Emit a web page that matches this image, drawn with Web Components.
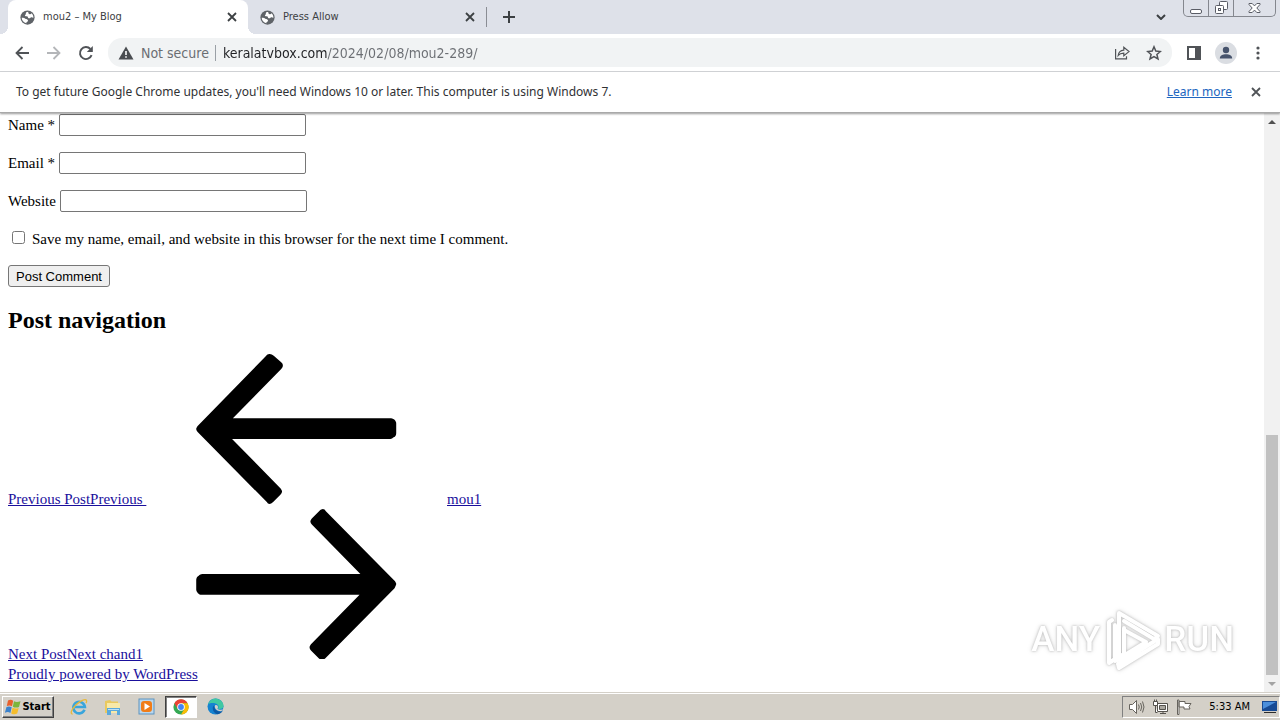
<!DOCTYPE html>
<html lang="en">
<head>
<meta charset="utf-8">
<title>mou2 – My Blog</title>
<style>
html, body {
  height: 100%;
  margin: 0;
}

body {
  --ui: "DejaVu Sans Condensed", "Noto Sans", sans-serif;
  background: #fff;
  color: #000;
  display: flex;
  flex-direction: column;
  font-family: "Liberation Serif", serif;
  font-size: 15px;
  overflow: hidden;
}
</style>
</head>
<body>

<tab-strip>
  <browser-tab active label="mou2 – My Blog"></browser-tab>
  <browser-tab label="Press Allow"></browser-tab>
</tab-strip>
<address-bar href="keralatvbox.com/2024/02/08/mou2-289/"></address-bar>
<info-bar>
  To get future Google Chrome updates, you'll need Windows 10 or later. This computer is using Windows 7.
  <a slot="link" href="#">Learn more</a>
</info-bar>
<page-view>
  <comment-form></comment-form>
  <post-navigation></post-navigation>
  <run-mark slot="overlay"></run-mark>
</page-view>
<task-bar time="5:33 AM"></task-bar>

<script>
// Shared by every element: open shadow root from a markup string
class Base extends HTMLElement {
  constructor() {
    super();
    const template = document.createElement( 'template' );
    template.innerHTML = this.constructor.markup;
    this._shadowRoot = this.attachShadow( {mode: 'open'} );
    this._shadowRoot.appendChild( template.content.cloneNode( true ) );
  }
}

// Plain button reset
const RESET = `
button {
  align-items: center;
  background: none;
  border: none;
  color: inherit;
  display: flex;
  flex: none;
  font: inherit;
  justify-content: center;
  margin: 0;
  padding: 0;
}
svg { display: block; flex: none; }
`;

const CROSS = `
<svg width="10" height="10" viewBox="0 0 10 10" fill="none" stroke="currentColor" stroke-width="1.800">
  <path d="M1 1l8 8M9 1l-8 8"/>
</svg>`;

// Tab
class BrowserTab extends Base {
  static markup = `
  <style>
  ${RESET}
  :host {
    align-items: center;
    box-sizing: border-box;
    color: #3c4043;
    display: flex;
    flex: 0 1 238px;
    font: 11px/16px var( --ui );
    gap: 8px;
    min-width: 0;
    padding: 0 11px 0 12px;
    position: relative;
  }

  :host( [active] ) {
    background: #fff;
    border-radius: 8px 8px 0 0;
    flex-basis: 240px;
  }

  /* Flared feet of the active tab */
  :host( [active] )::before,
  :host( [active] )::after {
    bottom: 0;
    content: '';
    height: 8px;
    position: absolute;
    width: 8px;
  }
  :host( [active] )::before {
    background: radial-gradient( circle at 0 0, transparent 8px, #fff 8px );
    left: -8px;
  }
  :host( [active] )::after {
    background: radial-gradient( circle at 100% 0, transparent 8px, #fff 8px );
    right: -8px;
  }

  span {
    flex: 1;
    overflow: hidden;
    white-space: nowrap;
  }
  button { height: 16px; width: 10px; }
  </style>
  <svg width="15" height="15" viewBox="0 0 16 16">
    <circle cx="8" cy="8" r="7.6" fill="#5f6368"/>
    <path fill="#fff" d="M8.8 1.8C7 1.900 6 2.600 6.200 3.900c.2 1-.9 1.200-1 2 0 .8 1 .7 1.800.7 1 0 1.500.6 1.500 1.500 0 .9 1.200.8 2 .6.8-.3 1-1 1.800-1 .8 0 1.300.6 2 .5.1-1.800-.7-3.500-1.900-4.700-.5.8-1.300 1.100-2.100.9-.9-.3-1.700-1-1.500-2.600zM1.800 8.300c.1 3 2.200 5.300 5 5.900-.1-1 .2-1.500 1-1.800.9-.4 1-1.300.3-2-.8-.8-1.900-.5-2.700-1.300-.8-.8-1.800-1.100-3.600-.8z"/>
  </svg>
  <span></span>
  <button aria-label="Close tab">${CROSS}</button>
  `;

  static get observedAttributes() {
    return ['label'];
  }

  attributeChangedCallback( name, oldValue, newValue ) {
    this._shadowRoot.querySelector( 'span' ).textContent = newValue;
  }
}

// Tab strip with the window controls
class TabStrip extends Base {
  static markup = `
  <style>
  ${RESET}
  :host {
    align-items: stretch;
    background: #dee1e9;
    color: #3c4043;
    display: flex;
    flex: none;
    height: 34px;
    padding: 0 4px 0 8px;
  }

  .rule {
    align-self: center;
    background: #8a8d94;
    height: 20px;
    width: 1px;
  }
  .new { width: 44px; }
  .space { flex: 1; }
  .list { width: 44px; }

  .controls {
    align-self: flex-start;
    border: solid 1px #84878e;
    border-radius: 0 0 5px 5px;
    border-top: none;
    box-sizing: border-box;
    display: flex;
    height: 17px;
    width: 93px;
  }
  .controls button { align-items: flex-end; flex: 1; padding-bottom: 2px; }
  .controls button + button { border-left: solid 1px #84878e; }
  .controls button:last-child { flex: 0 0 42px; }
  </style>
  <slot></slot>
  <div class="rule"></div>
  <button class="new" aria-label="New tab">
    <svg width="12" height="12" viewBox="0 0 12 12" stroke="currentColor" stroke-width="2"><path d="M6 0v12M0 6h12"/></svg>
  </button>
  <div class="space"></div>
  <button class="list" aria-label="Search tabs">
    <svg width="10" height="6" viewBox="0 0 10 6" fill="none" stroke="currentColor" stroke-width="2"><path d="M1 1l4 4 4-4"/></svg>
  </button>
  <div class="controls">
    <button aria-label="Minimize">
      <svg width="12" height="5" viewBox="0 0 12 5"><rect x=".5" y=".5" width="11" height="4" rx="1.500" fill="#fff" stroke="#5a5d66"/></svg>
    </button>
    <button aria-label="Restore">
      <svg width="13" height="13" viewBox="0 0 13 13" fill="#fff" stroke="#5a5d66"><rect x="4.500" y=".5" width="8" height="8" rx="1"/><rect x=".5" y="4.500" width="8" height="8" rx="1"/><rect x="3.500" y="7.500" width="2" height="2"/></svg>
    </button>
    <button aria-label="Close">
      <svg width="13" height="12" viewBox="0 0 13 12" fill="#fff" stroke="#5a5d66"><path d="M1 1.500h3.200l2.300 2.400 2.300-2.400H12v1L8.800 6l3.200 3.500v1H8.800L6.500 8.100l-2.300 2.400H1v-1L4.200 6 1 2.500z"/></svg>
    </button>
  </div>
  `;
}

// Navigation buttons and address field
class AddressBar extends Base {
  static markup = `
  <style>
  ${RESET}
  :host {
    align-items: center;
    background: #fff;
    border-bottom: solid 1px #d5d7da;
    color: #505357;
    display: flex;
    flex: none;
    font: 14px/20px var( --ui );
    height: 37px;
    padding: 0 6px;
  }
  button { height: 28px; width: 32px; }

  .field {
    align-items: center;
    background: #f1f3f4;
    border-radius: 14px;
    display: flex;
    flex: 1;
    height: 29px;
    margin: 0 6px;
    min-width: 0;
    padding: 0 2px 0 10px;
  }
  .state { color: #6b6e73; gap: 7px; width: auto; }
  .rule {
    background: #9aa0a6;
    height: 16px;
    margin: 0 7px 0 6px;
    width: 1px;
  }

  /* The host part of the address is darker than its path */
  input {
    background: linear-gradient( to right, #202124 104px, #6b6e73 104px ) text;
    border: none;
    color: #6b6e73;
    flex: 1;
    font: inherit;
    margin: 0;
    min-width: 0;
    outline: none;
    padding: 0;
    -webkit-text-fill-color: transparent;
  }
  .avatar svg { background: #dadde2; border-radius: 11px; }
  </style>
  <button aria-label="Back">
    <svg width="14" height="14" viewBox="0 0 14 14" fill="none" stroke="currentColor" stroke-width="1.800"><path d="M14 7H1.500M7.500 1l-6 6 6 6"/></svg>
  </button>
  <button aria-label="Forward">
    <svg width="14" height="14" viewBox="0 0 14 14" fill="none" stroke="#b4b6b9" stroke-width="1.800"><path d="M0 7h12.500M6.500 1l6 6-6 6"/></svg>
  </button>
  <button aria-label="Reload">
    <svg width="16" height="16" viewBox="0 0 16 16"><path d="M13.600 10.200A6 6 0 1 1 12.400 4" fill="none" stroke="currentColor" stroke-width="1.900"/><path fill="currentColor" d="M14.800 1v6H8.800z"/></svg>
  </button>
  <div class="field">
    <button class="state">
      <svg width="16" height="14" viewBox="0 0 16 14"><path fill="#4a4d51" d="M8 .5L15.500 13.500H.5z"/><path fill="#fff" d="M7.200 5h1.600v4H7.200zM7.200 10.200h1.600v1.600H7.200z"/></svg>
      Not secure
    </button>
    <div class="rule"></div>
    <input type="text" aria-label="Address" spellcheck="false">
    <button aria-label="Share">
      <svg width="16" height="15" viewBox="0 0 16 15" fill="none" stroke="currentColor" stroke-width="1.200"><path d="M1.600 4v9.900h10.900v-2.700M4.200 10.500c.4-3.400 2.400-5.200 5.600-5.400V2.300L15 6.600l-5.200 4.200V8.200c-2.600 0-4.300.6-5.600 2.300z"/></svg>
    </button>
    <button aria-label="Bookmark">
      <svg width="16" height="16" viewBox="0 0 16 16" fill="none" stroke="currentColor" stroke-width="1.500"><path d="M8 1.800l1.800 4.300 4.600.4-3.500 3 1.100 4.500L8 11.600 4 14l1.100-4.500-3.500-3 4.600-.4z"/></svg>
    </button>
  </div>
  <button aria-label="Side panel">
    <svg width="14" height="14" viewBox="0 0 14 14"><path fill="currentColor" fill-rule="evenodd" d="M0 0h14v14H0zM2 2v10h6V2z"/></svg>
  </button>
  <button class="avatar" aria-label="Profile">
    <svg width="22" height="22" viewBox="0 0 22 22" fill="#46536c"><circle cx="11" cy="8" r="3.200"/><path d="M4.800 16.500c0-3 3-4.300 6.200-4.300s6.200 1.300 6.200 4.300z"/></svg>
  </button>
  <button aria-label="Menu">
    <svg width="4" height="14" viewBox="0 0 4 14" fill="currentColor"><circle cx="2" cy="2" r="1.600"/><circle cx="2" cy="7" r="1.600"/><circle cx="2" cy="12" r="1.600"/></svg>
  </button>
  `;

  static get observedAttributes() {
    return ['href'];
  }

  attributeChangedCallback( name, oldValue, newValue ) {
    this._shadowRoot.querySelector( 'input' ).value = newValue;
  }
}

// Notice below the toolbar
class InfoBar extends Base {
  static markup = `
  <style>
  ${RESET}
  :host {
    align-items: center;
    background: #fff;
    border-bottom: solid 1px #a9a9a9;
    box-shadow: 0 1px 2px #0006;
    color: #303134;
    display: flex;
    flex: none;
    font: 12px/16px "Noto Sans", sans-serif;
    height: 40px;
    padding: 0 8px 0 16px;
    position: relative;
    z-index: 1;
  }
  p { flex: 1; margin: 0; }
  ::slotted( a ) { color: #2166c0; }
  button { color: #505357; height: 32px; margin-left: 8px; width: 32px; }
  </style>
  <p><slot></slot></p>
  <slot name="link"></slot>
  <button aria-label="Dismiss">${CROSS}</button>
  `;
}

// Document area and its scrollbar
class PageView extends Base {
  static markup = `
  <style>
  ${RESET}
  :host {
    display: flex;
    flex: 1;
    min-height: 0;
    position: relative;
  }
  main {
    flex: 1;
    line-height: 20px;
    overflow: hidden;
    padding: 1px 8px 0;
  }
  .scrollbar {
    background: #f1f1f1;
    display: flex;
    flex: none;
    flex-direction: column;
    width: 16px;
  }
  .scrollbar button { height: 17px; }
  .track {
    display: flex;
    flex: 1;
    flex-direction: column;
    justify-content: flex-end;
    padding: 0 2px;
  }
  .thumb { background: #c1c1c1; height: 44%; }
  </style>
  <main><slot></slot></main>
  <div class="scrollbar">
    <button aria-label="Scroll up"><svg width="8" height="4" viewBox="0 0 8 4"><path fill="#505050" d="M0 4l4-4 4 4z"/></svg></button>
    <div class="track"><div class="thumb"></div></div>
    <button aria-label="Scroll down"><svg width="8" height="4" viewBox="0 0 8 4"><path fill="#a3a3a3" d="M0 0l4 4 4-4z"/></svg></button>
  </div>
  <slot name="overlay"></slot>
  `;
}

class CommentForm extends Base {
  static markup = `
  <style>
  :host { display: block; }
  p { margin: 0 0 16px; }
  .text { align-items: center; display: flex; gap: 4px; }
  input[type=text], input[type=email], input[type=url] {
    border: solid 1px #767676;
    border-radius: 2px;
    box-sizing: border-box;
    height: 22px;
    margin: 0;
    padding: 1px 2px;
    width: 247px;
  }
  .check { align-items: center; display: flex; min-height: 21px; }
  input[type=checkbox] { margin: 0 7px 2px 4px; }
  button {
    background: #efefef;
    border: solid 1px #767676;
    border-radius: 3px;
    box-sizing: border-box;
    color: #000;
    font: 13px/16px "Liberation Sans", sans-serif;
    height: 22px;
    padding: 2px 7px 0;
  }
  .submit { display: flex; margin-bottom: 20px; }
  </style>
  <form>
    <p class="text"><label for="author">Name *</label><input id="author" type="text"></p>
    <p class="text"><label for="email">Email *</label><input id="email" type="email"></p>
    <p class="text"><label for="url">Website</label><input id="url" type="url"></p>
    <p class="check"><input id="consent" type="checkbox"><label for="consent">Save my name, email, and website in this browser for the next time I comment.</label></p>
    <p class="submit"><button type="button">Post Comment</button></p>
  </form>
  `;
}

class PostNavigation extends Base {
  static markup = `
  <style>
  :host { display: block; }
  h2 { font-size: 24px; line-height: 27px; margin: 0 0 20px; }
  a { color: #1a0f9c; }
  .row { align-items: flex-end; display: flex; height: 155px; }
  .label { min-width: 139px; white-space: pre; }
  svg { fill: #000; height: 150px; margin-bottom: 5px; width: 300px; }
  </style>
  <nav>
    <h2>Post navigation</h2>
    <a class="row" href="#"><span class="label">Previous PostPrevious </span><svg viewBox="0 0 43 32"><path d="M42.311 14.044c-0.178-0.178-0.533-0.356-0.711-0.356h-33.778l10.311-10.489c0.178-0.178 0.356-0.533 0.356-0.711 0-0.356-0.178-0.533-0.356-0.711l-1.600-1.422c-0.356-0.178-0.533-0.356-0.889-0.356s-0.533 0.178-0.711 0.356l-14.578 14.933c-0.178 0.178-0.356 0.533-0.356 0.711s0.178 0.533 0.356 0.711l14.756 14.933c0 0.178 0.356 0.356 0.533 0.356s0.533-0.178 0.711-0.356l1.600-1.600c0.178-0.178 0.356-0.533 0.356-0.711s-0.178-0.533-0.356-0.711l-10.311-10.489h33.778c0.178 0 0.533-0.178 0.711-0.356 0.356-0.178 0.533-0.533 0.533-0.889v-2.133c0-0.178-0.178-0.533-0.356-0.711z"/></svg><span>mou1</span></a>
    <a class="row" href="#"><span class="label">Next PostNext chand1</span><svg viewBox="0 0 43 32"><path d="M0.356 17.956c0.178 0.178 0.533 0.356 0.711 0.356h33.778l-10.311 10.489c-0.178 0.178-0.356 0.533-0.356 0.711 0 0.356 0.178 0.533 0.356 0.711l1.600 1.600c0.178 0.178 0.533 0.356 0.711 0.356s0.533-0.178 0.711-0.356l14.756-14.933c0.178-0.356 0.356-0.711 0.356-0.889s-0.178-0.533-0.356-0.711l-14.756-14.933c0-0.178-0.356-0.356-0.533-0.356s-0.533 0.178-0.711 0.356l-1.600 1.600c-0.178 0.178-0.356 0.533-0.356 0.711s0.178 0.533 0.356 0.711l10.311 10.489h-33.778c-0.178 0-0.533 0.178-0.711 0.356-0.356 0.178-0.533 0.533-0.533 0.889v2.133c0 0.178 0.178 0.533 0.356 0.711z"/></svg></a>
  </nav>
  <a href="#">Proudly powered by WordPress</a>
  `;
}

// Watermark over the page corner
class RunMark extends Base {
  static markup = `
  <style>
  :host {
    align-items: center;
    bottom: 20px;
    color: #fff;
    display: flex;
    filter: drop-shadow( 0 0 1px #bbb ) drop-shadow( 0 0 2px #ddd );
    font: 500 35px/64px Roboto, sans-serif;
    gap: 2px;
    pointer-events: none;
    position: absolute;
    right: 46px;
  }
  </style>
  <span>ANY</span>
  <svg width="60" height="64" viewBox="0 0 60 64" fill="none" stroke="#fff" stroke-width="4" stroke-linejoin="round" stroke-linecap="round">
    <path d="M17 48V5L56 28L52 31L22 13M22 20V46"/>
    <path d="M10 12L7 14V55L13 51V17M13 51L22 46M22 22L44 34L13 53M17 60L56 36V31L48 36L16 56z"/>
  </svg>
  <span>RUN</span>
  `;
}

// Desktop taskbar
class TaskBar extends Base {
  static markup = `
  <style>
  ${RESET}
  :host {
    align-items: center;
    background: #d4d0c8;
    border-top: solid 1px #d4d0c8;
    box-shadow: inset 0 1px #fff;
    color: #000;
    display: flex;
    flex: none;
    font: 11px/16px var( --ui );
    height: 27px;
    padding: 0 0 0 2px;
  }
  .start {
    border: solid 1px;
    border-color: #fff #404040 #404040 #fff;
    box-shadow: inset -1px -1px #808080;
    font-weight: bold;
    gap: 1px;
    height: 22px;
    margin-right: 9px;
    width: 52px;
  }
  .apps { display: flex; flex: 1; gap: 2px; }
  .apps button { box-sizing: border-box; height: 22px; width: 32px; }
  .apps .on {
    background: #fff;
    border: solid 1px;
    border-color: #404040 #fff #fff #404040;
    box-shadow: inset 1px 1px #808080;
  }
  .tray {
    align-items: center;
    border: solid 1px;
    border-color: #808080 #fff #fff #808080;
    box-sizing: border-box;
    display: flex;
    gap: 7px;
    height: 22px;
    padding: 0 1px 0 5px;
  }
  .tray time { margin: 0 3px 0 9px; }
  </style>
  <button class="start">
    <svg width="16" height="16" viewBox="0 0 16 16"><path fill="#e8602c" d="M3 1.500c2-1.200 3.600-.9 5.200.2L7 7.300c-1.600-1-3.100-1.200-5.200-.2z"/><path fill="#7cb53c" d="M9 2.200c1.700 1 3.700 1 6.500.1l-1.500 5.600c-2 1-4.400.8-6.200-.2z"/><path fill="#3b82cc" d="M1.500 8.100c2-1 3.600-.7 5.200.2l-1.300 5.600c-1.600-1-3.400-1.200-5.500-.2z"/><path fill="#f5bd2c" d="M7.500 8.800c1.800 1 4 1.100 6.200.2l-1.500 5.600c-2 1-4.200.8-6-.2z"/></svg>
    Start
  </button>
  <div class="apps">
    <button aria-label="Internet Explorer">
      <svg width="18" height="18" viewBox="0 0 18 18" fill="none"><path d="M14.500 11.800A5.800 5.800 0 1 1 14.900 9H5" stroke="#39a5dc" stroke-width="2.600"/><path d="M2.600 16c-2.700.2-1.300-4.500 3-8.800C10 2.800 15.500.500 16.500 2.400c.4.800.1 1.700-.4 2.700" stroke="#e8b93a" stroke-width="1.300"/></svg>
    </button>
    <button aria-label="File Explorer">
      <svg width="18" height="18" viewBox="0 0 18 18"><path fill="#e9c95f" d="M1 3l5-1 1.500 1.500H14V15H1z"/><path fill="#f8e9a8" d="M3 5h13v10H3z"/><path fill="#5aa9dc" d="M3 10h13v7h-3v-4H7v4H3z"/><path fill="#bfe1f5" d="M4 11h11v1H4z"/></svg>
    </button>
    <button aria-label="Media Player">
      <svg width="18" height="18" viewBox="0 0 18 18"><rect x="1" y="1" width="15" height="15" fill="#b9d7ee" stroke="#5d93bf"/><rect x="3" y="3" width="11" height="11" rx="3" fill="#f07d19"/><path fill="#fff" d="M6.500 5v7L12 8.500z"/></svg>
    </button>
    <button class="on" aria-label="Chrome">
      <svg width="16" height="16" viewBox="0 0 16 16"><circle cx="8" cy="8" r="7.600" fill="#34a853"/><path fill="#ea4335" d="M1.400 4.200A7.600 7.600 0 0 1 14.600 4.200H8L4.700 9.900z"/><path fill="#fbbc05" d="M14.600 4.200A7.600 7.600 0 0 1 8 15.600L11.300 9.900 8 4.200z"/><circle cx="8" cy="8" r="3.800" fill="#fff"/><circle cx="8" cy="8" r="2.900" fill="#4285f4"/></svg>
    </button>
    <button aria-label="Edge">
      <svg width="17" height="17" viewBox="0 0 17 17"><circle cx="8.500" cy="8.500" r="8" fill="#1583d0"/><path fill="#3fc8a2" d="M1 6.500C2.500 2 6-.2 10 .7c4 .9 6.500 4 6.500 7 0 2.800-2.600 3.800-5.500 3.100 1.200-2 .6-4.500-2.500-5.400C5.800 4.700 3 5 1 6.500z"/><path fill="#0c59a4" d="M6.600 7.500c-1.800 2.800-.6 7 3.500 8.800 2.500-.2 4.500-1.400 5.600-3.300-4.500 1.700-8-.8-9.100-5.500z"/><path fill="#d4d0c8" d="M8 7.500c1-1 3-.4 3 1.500 0 1-.8 1.500-.3 2.100.8.900 3.300 1 5.300-.2l-1.500 2.200C11 13.600 7 11 8 7.500z"/></svg>
    </button>
  </div>
  <div class="tray">
    <svg width="17" height="16" viewBox="0 0 17 16" fill="#fff" stroke="#66635d"><path d="M1.500 5.500h3l4-4v13l-4-4h-3z"/><path fill="none" d="M10.500 5.500q1.500 2.500 0 5M12.500 4q2.500 4 0 8M14.500 2.500q3 5.500 0 11"/></svg>
    <svg width="17" height="16" viewBox="0 0 17 16" fill="#fff" stroke="#55524d"><path d="M5.500 4.500h10v8h-10zM8 14.500h6M11 12.500v2"/><path fill="#aaa79f" d="M7.500 6.500h6v4h-6z"/><path d="M1.500 2.500h4v4h-4zM2.500.5v2M4.500.5v2M3.500 6.500v7h2"/></svg>
    <svg width="17" height="16" viewBox="0 0 17 16" fill="#fff" stroke="#66635d"><path d="M1.500 1v14.500h1.500V1zM3 2.500h6v2h6l-2 3 1 2.500H8v-2H3z"/></svg>
    <time></time>
    <svg width="18" height="16" viewBox="0 0 18 16"><path fill="#174a94" d="M2 2h15v10H2z"/><path fill="#4b8fdc" d="M3 3h13L3 10z"/><path fill="#2c2c2c" d="M4 13h12v1H4z"/></svg>
  </div>
  `;

  static get observedAttributes() {
    return ['time'];
  }

  attributeChangedCallback( name, oldValue, newValue ) {
    this._shadowRoot.querySelector( 'time' ).textContent = newValue;
  }
}

window.customElements.define( 'browser-tab', BrowserTab );
window.customElements.define( 'tab-strip', TabStrip );
window.customElements.define( 'address-bar', AddressBar );
window.customElements.define( 'info-bar', InfoBar );
window.customElements.define( 'page-view', PageView );
window.customElements.define( 'comment-form', CommentForm );
window.customElements.define( 'post-navigation', PostNavigation );
window.customElements.define( 'run-mark', RunMark );
window.customElements.define( 'task-bar', TaskBar );
</script>
</body>
</html>
